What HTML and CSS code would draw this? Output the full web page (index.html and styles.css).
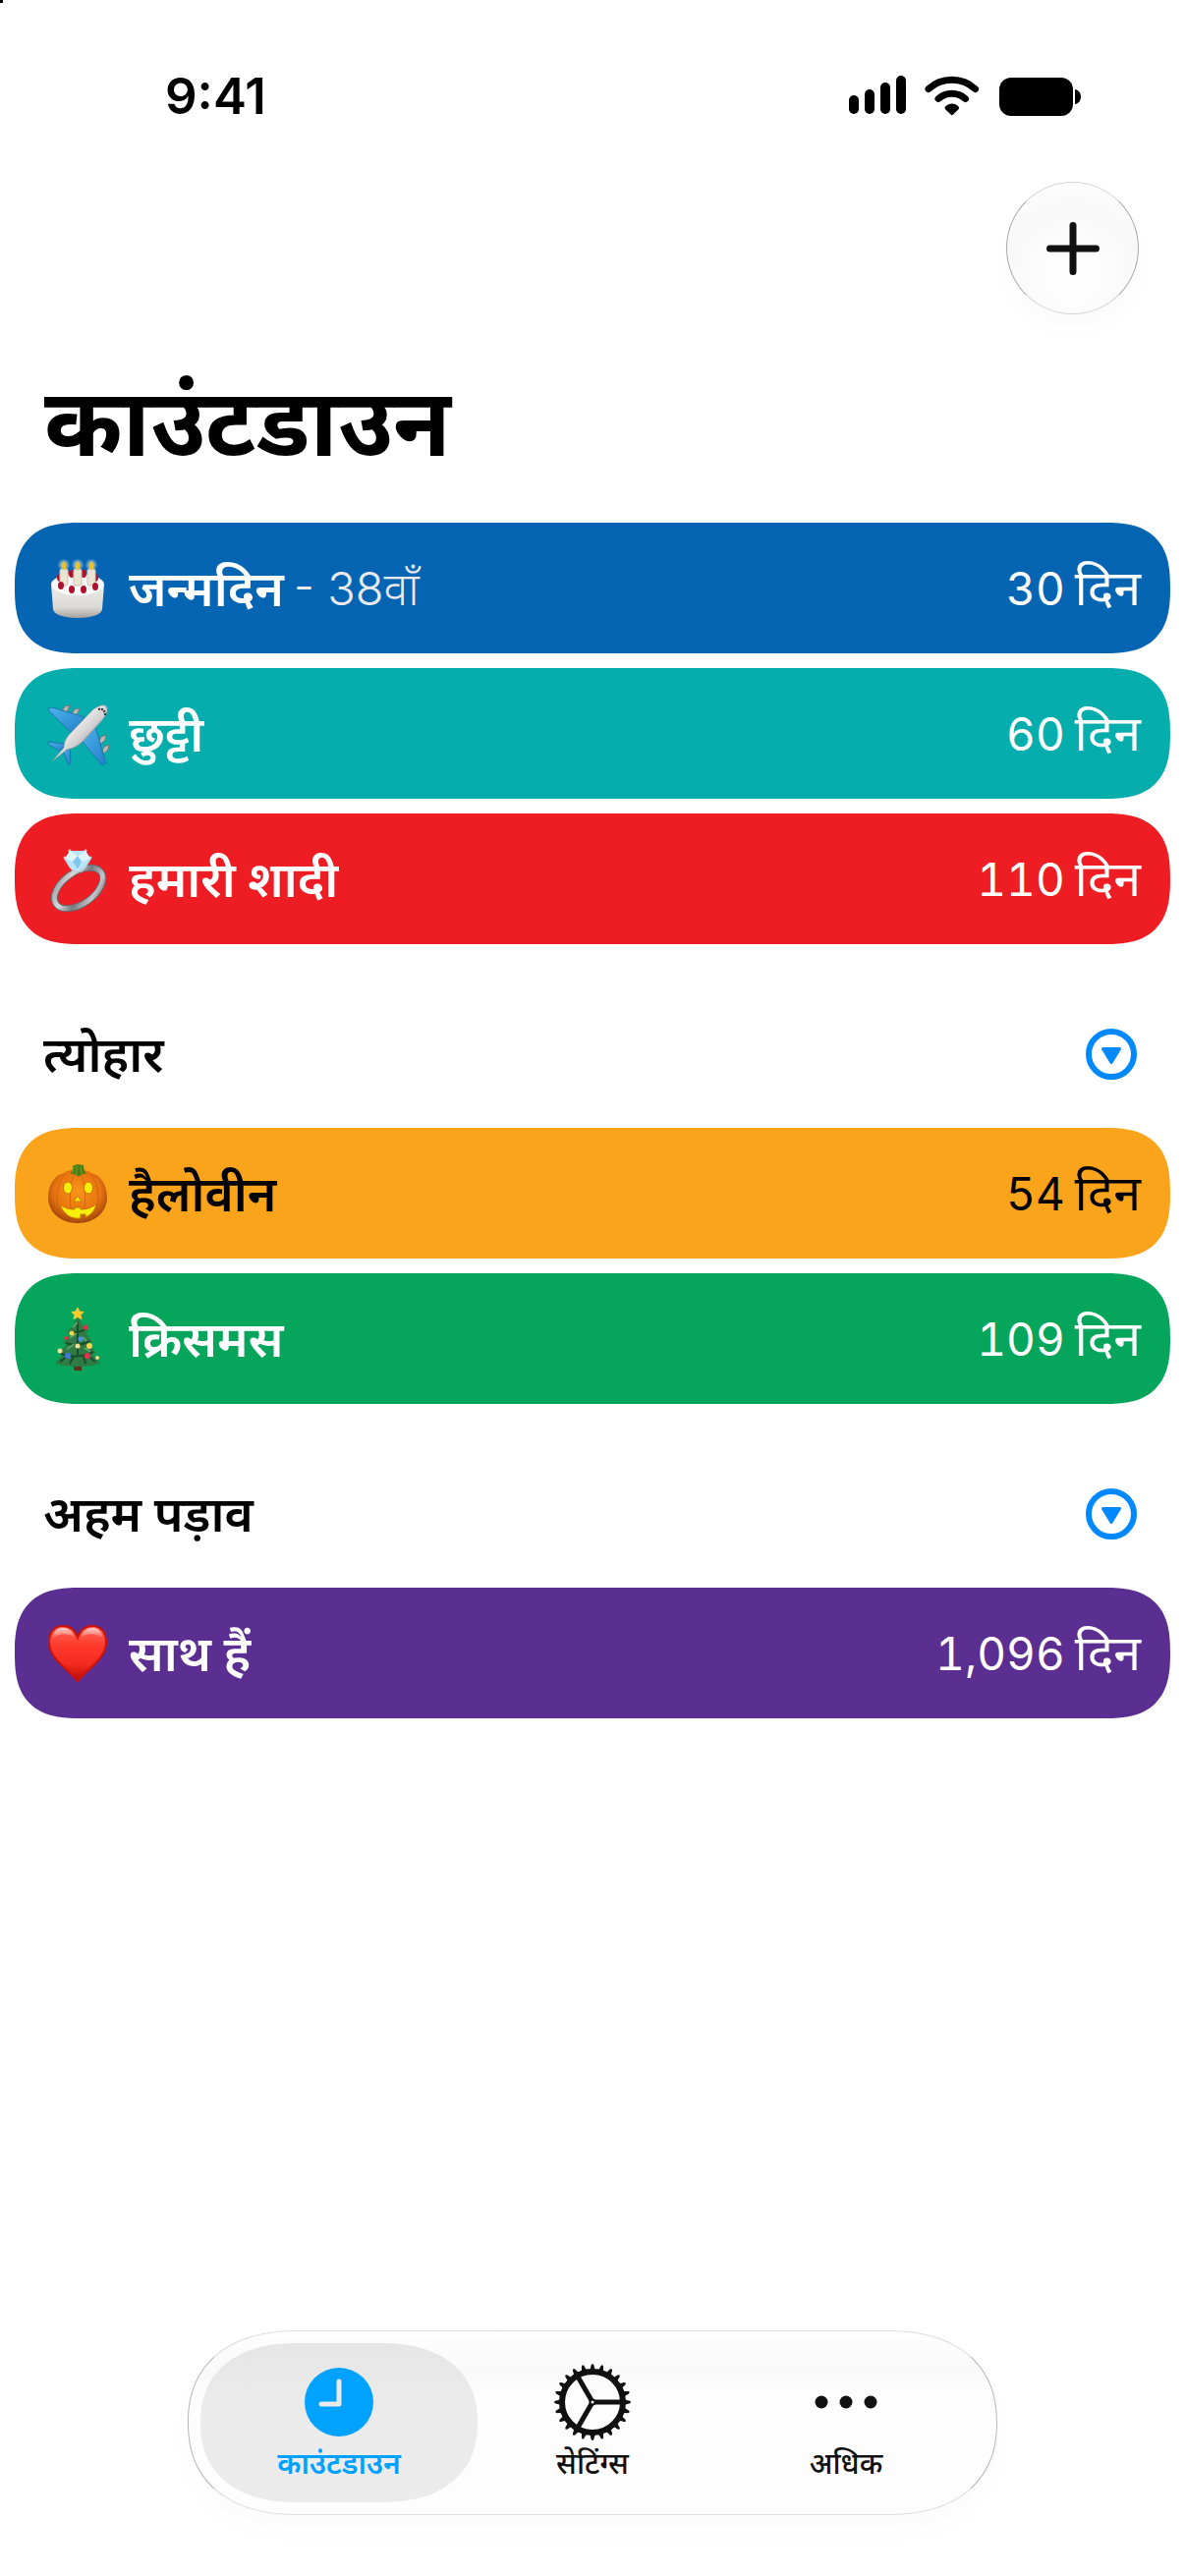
FILE: index.html
```html
<!DOCTYPE html>
<html lang="hi">
<head>
  <meta charset="UTF-8" />
  <meta name="viewport" content="width=device-width, initial-scale=1.0" />
  <title>काउंटडाउन</title>
  <link rel="stylesheet" href="styles.css">
</head>
<body>
  <div class="app">
    <!-- Status bar -->
    <div class="status-bar">
      <span class="time">9:41</span>
      <svg class="status-icons" viewBox="0 0 236 42">
        <rect x="0" y="20" width="10" height="19" rx="5"/>
        <rect x="16" y="14" width="10" height="25" rx="5"/>
        <rect x="32" y="7" width="10" height="32" rx="5"/>
        <rect x="48" y="0" width="10" height="39" rx="5"/>
        <g fill="none" stroke="#000" stroke-width="7" stroke-linecap="round">
          <path d="M81 13.5a35 35 0 0 1 47.500 0"/>
          <path d="M91 23.500a20.500 20.500 0 0 1 27.500 0"/>
        </g>
        <path d="M98 31.500c4-4 10-4 13.500 0 .8 1 .7 2-.2 2.900l-5.200 5.200c-.8.8-1.700.8-2.500 0l-5.300-5.200c-.9-.9-1-1.900-.3-2.900z"/>
        <rect x="153" y="2" width="75" height="39" rx="12"/>
        <path d="M230 14c8 1 8 14 0 15z"/>
      </svg>
    </div>

    <div class="toolbar">
      <button class="add-btn" aria-label="जोड़ें">
        <svg viewBox="0 0 54 54"><path d="M27 3.500v47M3.500 27h47"/></svg>
      </button>
    </div>

    <h1>काउंटडाउन</h1>

    <main>
      <ul class="list">
        <li class="row blue">
          <svg class="emoji" viewBox="0 0 64 64">
            <defs>
              <linearGradient id="cake" x1="0" y1="0" x2="0" y2="1">
                <stop offset="0" stop-color="#f6f5f3"/>
                <stop offset=".75" stop-color="#dcdad6"/>
                <stop offset="1" stop-color="#a5a29c"/>
              </linearGradient>
              <radialGradient id="glow">
                <stop offset="0" stop-color="#fff6a0"/>
                <stop offset="1" stop-color="#9cc6dc" stop-opacity=".2"/>
              </radialGradient>
            </defs>
            <path d="M5 28c0-14 54-14 54 0l-2 25c-1 12-49 12-50 0z" fill="url(#cake)"/>
            <ellipse cx="32" cy="28" rx="26" ry="11" fill="#fbfafa"/>
            <g fill="#b0102f">
              <ellipse cx="26" cy="17" rx="3" ry="4"/><ellipse cx="38" cy="17" rx="3" ry="4"/>
              <ellipse cx="14" cy="21" rx="3" ry="4"/><ellipse cx="50" cy="21" rx="3" ry="4"/>
            </g>
            <g fill="#e9e5d3" stroke="#c9c4ae" stroke-width="1">
              <rect x="14" y="12" width="8" height="17" rx="2"/>
              <rect x="28" y="12" width="8" height="17" rx="2"/>
              <rect x="42" y="12" width="8" height="17" rx="2"/>
            </g>
            <g fill="#b0102f">
              <ellipse cx="15" cy="29" rx="3" ry="4"/><ellipse cx="26" cy="33" rx="3" ry="4"/>
              <ellipse cx="38" cy="33" rx="3" ry="4"/><ellipse cx="50" cy="30" rx="3" ry="4"/>
            </g>
            <g fill="url(#glow)">
              <circle cx="18" cy="8" r="6"/><circle cx="32" cy="8" r="6"/><circle cx="46" cy="8" r="6"/>
            </g>
            <path d="M18 4c4 5 2 9 0 9s-4-4 0-9zM32 4c4 5 2 9 0 9s-4-4 0-9zM46 4c4 5 2 9 0 9s-4-4 0-9z" fill="#f0c022"/>
          </svg>
          <span class="name">जन्मदिन</span>
          <span class="note">- 38वाँ</span>
          <span class="days">30 <span class="unit">दिन</span></span>
        </li>
        <li class="row teal">
          <svg class="emoji" viewBox="0 0 64 64">
            <defs>
              <linearGradient id="hull" x1="0" y1="0" x2="1" y2="1">
                <stop offset=".3" stop-color="#fafafa"/>
                <stop offset=".55" stop-color="#d0d0d2"/>
                <stop offset=".75" stop-color="#85868a"/>
              </linearGradient>
              <linearGradient id="wing" x1="0" y1="0" x2="1" y2="1">
                <stop offset="0" stop-color="#4fb2ec"/>
                <stop offset="1" stop-color="#1f7fc8"/>
              </linearGradient>
            </defs>
            <g fill="#b9b7b5" stroke="#77787a" stroke-width="1">
              <path d="M16 9l3-5 5-1-2 5-4 3z"/><path d="M26 12l3-5 5-1-2 5-4 3z"/>
              <path d="M54 39l2-4 5-2-1 5-4 4z"/><path d="M57 49l2-4 5-2-1 5-4 4z"/>
            </g>
            <g fill="url(#wing)" stroke="#1d76ae" stroke-width="1">
              <path d="M2 6l4-1 33 10-12 17L3 9z"/>
              <path d="M37 40l13-15 11 37-4 2z"/>
              <path d="M2 40l15 2 3 2-7 5L3 43z"/>
              <path d="M17 49l7-4 1 16-2 3z"/>
            </g>
            <path d="M48 7c6-4 12-6 14-2 1 4-1 8-5 13L38 39c-6 6-12 8-17 9L6 60l12-14c0-6 3-11 7-15z" fill="url(#hull)" stroke="#8b8b90" stroke-width=".6"/>
            <path d="M53 7c4-1 7 1 7 6" fill="none" stroke="#333" stroke-width="2" stroke-dasharray="2 1"/>
            <path d="M60 3c2 0 3 2 2 4z" fill="#4da9e6"/>
          </svg>
          <span class="name">छुट्टी</span>
          <span class="days">60 <span class="unit">दिन</span></span>
        </li>
        <li class="row red">
          <svg class="emoji" viewBox="0 0 64 64">
            <defs>
              <linearGradient id="band" x1="0" y1="0" x2="1" y2="1">
                <stop offset="0" stop-color="#8a8d93"/>
                <stop offset=".3" stop-color="#d8d9dc"/>
                <stop offset=".55" stop-color="#777a80"/>
                <stop offset=".8" stop-color="#c5c6ca"/>
                <stop offset="1" stop-color="#6b6e74"/>
              </linearGradient>
            </defs>
            <g transform="rotate(-35 33 41)" fill="none">
              <ellipse cx="33" cy="41" rx="28" ry="16" stroke="#63666c" stroke-width="7"/>
              <ellipse cx="33" cy="41" rx="28" ry="16" stroke="url(#band)" stroke-width="5"/>
            </g>
            <path d="M19 10l5 8 4 5h8l4-5 5-8M24 3l2 5M40 3l-2 5" fill="none" stroke="#c6cacf" stroke-width="3" stroke-linecap="round"/>
            <path d="M24 3h16l5 8-6 9-7 4-8-4-4-9z" fill="#b5e4fb"/>
            <path d="M24 3l8 5 8-5 5 8-9 3-4 9-5-9-8-3z" fill="#dff6ff"/>
            <path d="M27 14l5-6 4 6-4 8z" fill="#82c6ee"/>
          </svg>
          <span class="name">हमारी शादी</span>
          <span class="days">110 <span class="unit">दिन</span></span>
        </li>
      </ul>

      <section>
        <div class="section-head">
          <h2>त्योहार</h2>
          <button class="fold-btn" aria-label="त्योहार">
            <svg viewBox="0 0 52 52">
              <circle cx="26" cy="26" r="23"/>
              <path d="M17.500 20.500h17L26 34.500z"/>
            </svg>
          </button>
        </div>
        <ul class="list">
          <li class="row orange">
            <svg class="emoji" viewBox="0 0 64 64">
              <defs>
                <radialGradient id="pumpkin" cx=".5" cy=".4" r=".6">
                  <stop offset="0" stop-color="#fb9419"/>
                  <stop offset=".65" stop-color="#e8740f"/>
                  <stop offset="1" stop-color="#a0440b"/>
                </radialGradient>
              </defs>
              <path d="M32 10c5-3 11-2 14 1 10 2 16 13 16 25 0 14-12 26-30 26S2 50 2 36c0-12 6-23 16-25 3-3 9-4 14-1z" fill="url(#pumpkin)"/>
              <path d="M19 12c-10 12-11 34 0 46M45 12c10 12 11 34 0 46M28 13c-5 14-5 33 0 48M36 13c5 14 5 33 0 48" fill="none" stroke="#c65d0b" stroke-width="1" opacity=".7"/>
              <path d="M24 12c2-2 3-4 3-8l4-2 7 1c0 4 1 6 3 9-4-1-6 1-8 3-3-3-6-4-9-3z" fill="#4c7d12"/>
              <path d="M31 3v10M35 4l1 8M28 5l-1 6" stroke="#75a332" stroke-width="1" fill="none"/>
              <g fill="#f8ee0a" stroke="#c97604" stroke-width="1">
                <ellipse cx="22" cy="26" rx="4.500" ry="6"/>
                <ellipse cx="43" cy="26" rx="4.500" ry="6"/>
                <path d="M32 34l4 6h-8z"/>
                <path d="M14 43c5 4 10 5 15 5v-2h6v2c7 0 11-2 16-5-2 7-6 11-11 13v-3h-5v4c-9 1-17-3-21-14z"/>
              </g>
            </svg>
            <span class="name">हैलोवीन</span>
            <span class="days">54 <span class="unit">दिन</span></span>
          </li>
          <li class="row green">
            <svg class="emoji" viewBox="0 0 64 64">
              <path d="M28 54h8v10h-8z" fill="#59321e"/>
              <path d="M32 9l5 9 6 6-3 1 7 10-4 1 8 10-4 1 8 10c-14 4-34 4-46 0l8-9-4-1 8-10-4-1 8-9-4-2 6-6z" fill="#2f7a45"/>
              <path d="M25 24c5 2 10 1 15-2M20 36c8 3 16 2 24-2M15 47c11 4 22 3 33-2M14 55l7-5M24 57l4-7M40 57l-2-7M50 55l-6-5M32 14v34" fill="none" stroke="#164f2c" stroke-width="2"/>
              <path d="M27 20l5-5M24 31l7-5M21 42l8-5M37 30l4 4M39 41l6 4" fill="none" stroke="#57a868" stroke-width="2"/>
              <path d="M32 0l2 4 4 .5-3 3 1 4-4-2-4 2 1-4-3-3 4-.5z" fill="#fbcb2d" stroke="#fbcb2d"/>
              <circle cx="40" cy="20" r="2.500" fill="#e5304b"/>
              <circle cx="26" cy="26" r="2.500" fill="#f8d34c"/>
              <circle cx="20" cy="31" r="2" fill="#e5304b"/>
              <circle cx="35" cy="32" r="2.500" fill="#4d8fe8"/>
              <circle cx="32" cy="39" r="2.500" fill="#f4e090"/>
              <circle cx="44" cy="39" r="3" fill="#f8d34c"/>
              <circle cx="14" cy="44" r="2.500" fill="#f1df9c"/>
              <circle cx="22" cy="49" r="3" fill="#4178dc"/>
              <circle cx="42" cy="49" r="3" fill="#e5304b"/>
              <circle cx="52" cy="51" r="2" fill="#f3d98a"/>
            </svg>
            <span class="name">क्रिसमस</span>
            <span class="days">109 <span class="unit">दिन</span></span>
          </li>
        </ul>
      </section>

      <section>
        <div class="section-head">
          <h2>अहम पड़ाव</h2>
          <button class="fold-btn" aria-label="अहम पड़ाव">
            <svg viewBox="0 0 52 52">
              <circle cx="26" cy="26" r="23"/>
              <path d="M17.500 20.500h17L26 34.500z"/>
            </svg>
          </button>
        </div>
        <ul class="list">
          <li class="row purple">
            <svg class="emoji" viewBox="0 0 64 64">
              <defs>
                <linearGradient id="heart" x1="0" y1="0" x2="0" y2="1">
                  <stop offset="0" stop-color="#ff6a5e"/>
                  <stop offset=".35" stop-color="#ff3b2c"/>
                  <stop offset=".7" stop-color="#f32a1e"/>
                  <stop offset="1" stop-color="#b80c05"/>
                </linearGradient>
                <linearGradient id="shine" x1="0" y1="0" x2="0" y2="1">
                  <stop offset="0" stop-color="#fff" stop-opacity=".7"/>
                  <stop offset="1" stop-color="#fff" stop-opacity="0"/>
                </linearGradient>
              </defs>
              <path d="M32 16C35 7 41 4 47 4c9 0 14 7 14 16 0 17-16 25-29 40C19 45 3 37 3 20 3 11 8 4 17 4c6 0 12 3 15 12z" fill="url(#heart)" stroke="#cf1209" stroke-width="2"/>
              <path d="M6 17C8 8 12 6 17 6s10 3 12 10c-7-5-16-5-23 1zM35 16c2-7 7-10 12-10s9 2 11 11c-7-6-16-6-23-1z" fill="url(#shine)"/>
            </svg>
            <span class="name">साथ हैं</span>
            <span class="days">1,096 <span class="unit">दिन</span></span>
          </li>
        </ul>
      </section>
    </main>

    <nav class="tab-bar">
      <a href="#" class="tab active">
        <svg viewBox="0 0 80 80">
          <circle cx="40" cy="40" r="35" fill="currentColor"/>
          <path class="hands" d="M40 19v23H22"/>
        </svg>
        काउंटडाउन
      </a>
      <a href="#" class="tab">
        <svg viewBox="0 0 80 80">
          <g fill="none" stroke="currentColor">
            <circle cx="40" cy="40" r="31" stroke-width="6"/>
            <path stroke-width="5" d="M42 40h27M39 38.300L25 14M39 41.700L25 66"/>
            <circle cx="40" cy="40" r="2.500" stroke-width="2"/>
          </g>
          <g id="teeth" fill="currentColor"></g>
        </svg>
        सेटिंग्स
      </a>
      <a href="#" class="tab">
        <svg viewBox="0 0 80 80" fill="currentColor">
          <circle cx="15" cy="40" r="6.500"/>
          <circle cx="40" cy="40" r="6.500"/>
          <circle cx="65" cy="40" r="6.500"/>
        </svg>
        अधिक
      </a>
    </nav>
  </div>

  <script>
    // Put the 24 teeth around the gear
    const teeth = document.getElementById('teeth');
    for (let i = 0; i < 24; i++) {
      const tooth = document.createElementNS('http://www.w3.org/2000/svg', 'path');
      tooth.setAttribute('d', 'M35.500 8.500Q38 7 38.500 2.500Q40 -.5 41.500 2.500Q42 7 44.500 8.500z');
      tooth.setAttribute('transform', 'rotate(' + i * 15 + ' 40 40)');
      teeth.appendChild(tooth);
    }
  </script>
</body>
</html>
```
FILE: styles.css
```css
* {
  box-sizing: border-box;
}
body {
  margin: 0;
  background-color: #fff;
  color: #000;
  font-family: Inter, "Noto Sans Devanagari", "Noto Sans", sans-serif;
}
/* Small mark in the screen corner */
body::before {
  content: '';
  position: absolute;
  top: 0;
  left: 0;
  width: 3px;
  height: 3px;
  background-color: #000;
}
button {
  padding: 0;
  border: none;
  background: none;
  cursor: pointer;
}
svg {
  display: block;
  flex-shrink: 0;
}
.app {
  display: flex;
  flex-direction: column;
  min-height: 100vh;
}
/* Status bar */
.status-bar {
  display: flex;
  justify-content: space-between;
  align-items: center;
  height: 185px;
  padding: 10px 106px 0 168px;
}
.time {
  font-size: 51px;
  font-weight: 600;
  line-height: 60px;
}
.status-icons {
  width: 236px;
  height: 42px;
}
/* Round glass button at the top right */
.toolbar {
  display: flex;
  justify-content: flex-end;
  padding: 0 47px;
}
.add-btn {
  display: flex;
  justify-content: center;
  align-items: center;
  width: 135px;
  height: 135px;
  border: 1px solid;
  border-color: #d4d4d4 #a8a8a8;
  border-radius: 50%;
  background: radial-gradient(circle at 50% 70%, #fdfdfd 25%, #f8f8f8 60%, #fefefe 85%);
  box-shadow: 0 14px 24px rgba(0,0,0,0.02);
}
.add-btn svg {
  width: 54px;
  height: 54px;
  fill: none;
  stroke: #111;
  stroke-width: 7;
  stroke-linecap: round;
}
h1 {
  margin: 0;
  padding: 44px 45px 0;
  height: 212px;
  font-size: 96px;
  font-weight: 700;
  line-height: 130px;
}
/* Countdown rows */
.list {
  display: flex;
  flex-direction: column;
  gap: 15px;
  margin: 0;
  padding: 0 15px;
  list-style: none;
}
.row {
  display: flex;
  align-items: center;
  height: 133px;
  padding: 0 30px 0 32px;
  border-radius: 66px;
  corner-shape: superellipse(1.4);
  color: #fff;
  font-size: 47px;
  line-height: 64px;
}
.emoji {
  width: 64px;
  height: 64px;
  margin-right: 20px;
  overflow: visible;
}
.name {
  font-size: 50px;
  font-weight: 600;
}
.note {
  margin-left: 10px;
  color: #e9e9ee;
  font-weight: 300;
}
.days {
  display: flex;
  align-items: baseline;
  gap: 10px;
  margin-left: auto;
  font-size: 46px;
  font-variant-numeric: tabular-nums;
}
.unit {
  font-size: 50px;
}
.blue { background-color: #0665b3; }
.teal { background-color: #05aead; }
.red { background-color: #ee1d24; }
.orange { background-color: #faa41c; color: #000; }
.green { background-color: #05a55c; }
.purple { background-color: #5b2e91; }
/* Section titles */
.section-head {
  display: flex;
  justify-content: space-between;
  align-items: center;
  height: 187px;
  padding: 37px 49px 0 44px;
}
h2 {
  margin: 0;
  font-size: 50px;
  font-weight: 600;
  line-height: 64px;
}
.fold-btn svg {
  width: 52px;
  height: 52px;
  fill: none;
  stroke: #0088ff;
  stroke-width: 6;
}
.fold-btn path {
  fill: #0088ff;
  stroke-width: 3;
  stroke-linejoin: round;
}
/* Floating tab bar */
.tab-bar {
  position: sticky;
  bottom: 62px;
  display: flex;
  align-self: center;
  margin: auto 0 62px;
  padding: 12px;
  border: 1px solid;
  border-color: #dedede #b8b8b8;
  border-radius: 112px / 94px;
  corner-shape: superellipse(1.2);
  background: linear-gradient(#fefefe, #f9f9f9 22%, #fdfdfd 34%, #fdfdfd);
  box-shadow: 0 14px 30px rgba(0,0,0,0.02);
}
.tab {
  display: flex;
  flex-direction: column;
  align-items: center;
  width: 282px;
  height: 162px;
  padding-top: 20px;
  border-radius: 98px / 81px;
  corner-shape: superellipse(1.2);
  color: #111;
  font-size: 30px;
  font-weight: 500;
  line-height: 44px;
  text-decoration: none;
}
.tab + .tab {
  margin-left: -24px;
}
.tab svg {
  width: 80px;
  height: 80px;
}
.tab.active {
  background: linear-gradient(#e6e6e6, #ebebeb 40%);
  color: #00a2ff;
  font-weight: 600;
}
.hands {
  fill: none;
  stroke: #eaeaea;
  stroke-width: 5;
  stroke-linecap: round;
  stroke-linejoin: round;
}
```
